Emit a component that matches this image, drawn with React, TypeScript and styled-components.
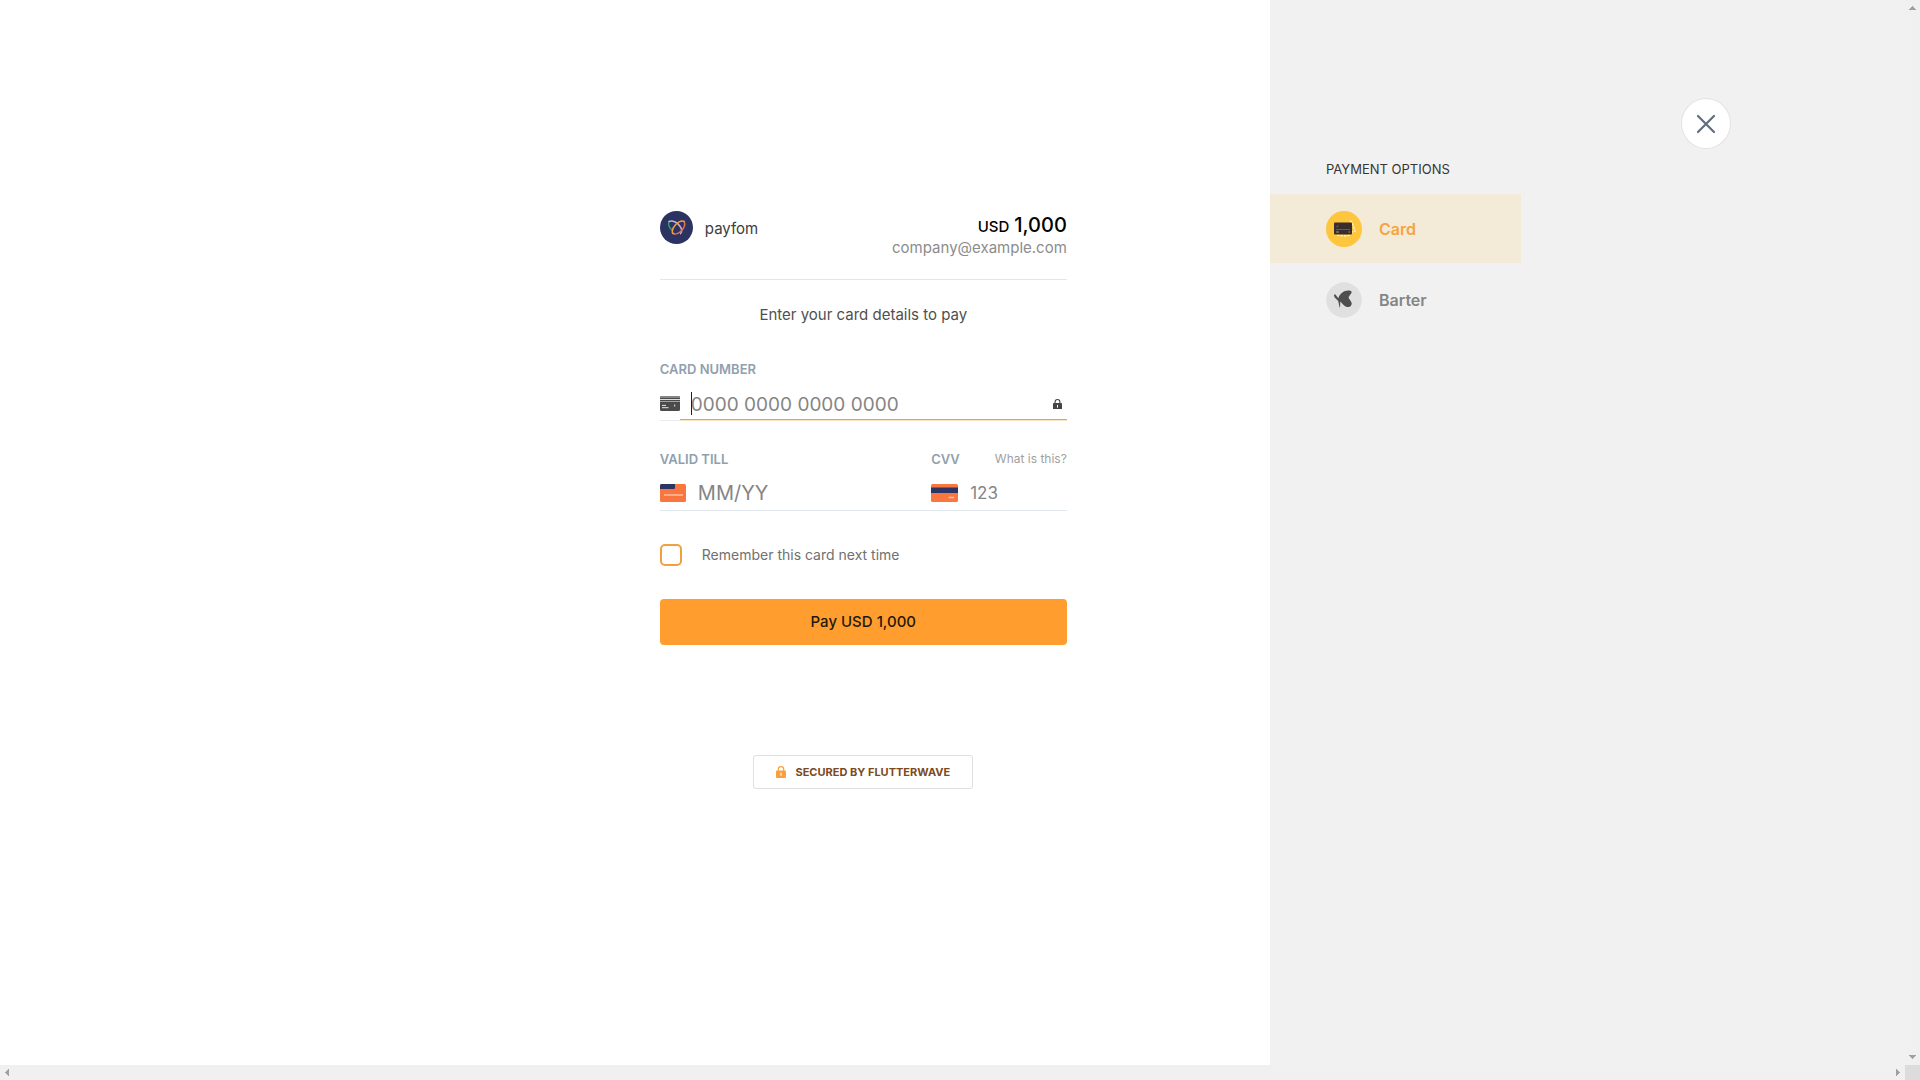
import React from "react";
import styled, { createGlobalStyle } from "styled-components";

const GlobalStyle = createGlobalStyle`
  *, *::before, *::after { box-sizing: border-box; }
  body {
    margin: 0;
    background: #ffffff;
    font-family: Inter, "Liberation Sans", sans-serif;
    font-size: 15px;
    line-height: 20px;
    color: #4a4a4a;
  }
  button, input { font: inherit; color: inherit; }
`;

const Window = styled.div`
  display: grid;
  grid-template-columns: minmax(0, 1fr) 15px;
  grid-template-rows: minmax(0, 1fr) 15px;
  min-height: 100vh;
`;

const Page = styled.div`
  display: grid;
  grid-template-columns: 2fr 1fr;
`;

const Main = styled.main`
  display: flex;
  justify-content: flex-end;
  align-items: flex-start;
  padding: 211px 16% 0 0;
  background: #ffffff;
`;

const Form = styled.form`
  display: flex;
  flex-direction: column;
  width: 407px;
`;

const Header = styled.header`
  display: flex;
  justify-content: space-between;
  align-items: flex-start;
  height: 69px;
  border-bottom: 1px solid #e6e6e6;
`;

const Merchant = styled.div`
  display: flex;
  gap: 12px;
  line-height: 36px;
  color: #3d3d3d;
`;

const Amount = styled.div`
  text-align: right;
  line-height: 14px;
  color: #8c8c8c;
`;

const Total = styled.div`
  display: flex;
  justify-content: flex-end;
  align-items: baseline;
  gap: 5px;
  line-height: 28px;
  font-weight: 500;
  color: #000000;
`;

const TotalValue = styled.span`
  font-size: 20px;
`;

const Prompt = styled.p`
  margin: 25px 0 34px;
  text-align: center;
  color: #4f4f4f;
`;

const LabelRow = styled.div`
  display: flex;
  justify-content: space-between;
  line-height: 20px;
  font-size: 13px;
`;

const Label = styled.label`
  font-weight: 600;
  color: #90a0ae;
`;

const HelpLink = styled.a`
  font-size: 12px;
  color: #a0a0a0;
  text-decoration: none;
`;

const TextInput = styled.input<{ $size: number }>`
  flex: 1;
  min-width: 0;
  height: 100%;
  padding: 0;
  border: 0;
  outline: 0;
  background: transparent;
  font-size: ${(p) => p.$size}px;
  &::placeholder { color: #858585; opacity: 1; }
`;

const NumberField = styled.div`
  display: flex;
  align-items: center;
  height: 42px;
  margin-bottom: 28px;
`;

const NumberIcon = styled.span`
  display: flex;
  align-items: center;
  height: 100%;
  padding-top: 6px;
  border-bottom: 1px solid #e6ecf0;
`;

const NumberEntry = styled.span`
  position: relative;
  display: flex;
  flex: 1;
  align-items: center;
  height: 100%;
  padding: 9px 5px 0 11px;
  border-bottom: 1px solid #fbe3c4;
  box-shadow: inset 0 -1px 0 #f0a040;
  &::before {
    content: "";
    position: absolute;
    left: 11px;
    top: 13px;
    width: 1px;
    height: 23px;
    background: #14202b;
  }
`;

const Fields = styled.div`
  display: grid;
  grid-template-columns: minmax(0, 2fr) minmax(0, 1fr);
  border-bottom: 1px solid #e2e8ee;
`;

const SmallField = styled.div`
  display: flex;
  align-items: center;
  gap: 12px;
  height: 30px;
  margin: 9px 0 2px;
`;

const Remember = styled.label`
  display: flex;
  align-items: center;
  gap: 20px;
  margin: 33px 0;
  font-size: 14px;
  color: #717171;
`;

const Checkbox = styled.input`
  appearance: none;
  width: 22px;
  height: 22px;
  margin: 0;
  border: 2px solid #f2a03f;
  border-radius: 5px;
  background: #ffffff;
  &:checked { background: #f2a03f; }
`;

const PayButton = styled.button`
  height: 46px;
  padding: 0;
  border: 0;
  border-radius: 4px;
  background: #ff9e2f;
  font-weight: 500;
  font-size: 15px;
  color: #24180c;
`;

const Secured = styled.div`
  display: flex;
  align-items: center;
  align-self: center;
  gap: 9px;
  height: 34px;
  margin-top: 110px;
  padding: 0 22px;
  border: 1px solid #e0e0e0;
  border-radius: 3px;
  font-size: 11px;
  font-weight: 700;
  color: #7a4a1e;
`;

const Side = styled.aside`
  padding-top: 98px;
  background: #f1f1f1;
`;

const CloseRow = styled.div`
  display: flex;
  justify-content: flex-end;
  padding-right: 174px;
`;

const CloseButton = styled.button`
  display: grid;
  place-items: center;
  width: 50px;
  height: 51px;
  padding: 0;
  border: 1px solid #e2e2e2;
  border-radius: 50%;
  background: #ffffff;
`;

const SideTitle = styled.h2`
  margin: 10px 0 15px;
  padding-left: 56px;
  font-size: 13px;
  line-height: 20px;
  font-weight: 400;
  color: #363636;
`;

const Option = styled.button<{ $active?: boolean }>`
  display: flex;
  align-items: center;
  gap: 17px;
  width: 251px;
  height: 69px;
  margin-bottom: 2px;
  padding: 1px 0 0 56px;
  border: 0;
  background: ${(p) => (p.$active ? "#f3ead8" : "transparent")};
  font-size: 16px;
  font-weight: 600;
  color: ${(p) => (p.$active ? "#f5a445" : "#858585")};
`;

const Track = styled.div<{ $vertical?: boolean }>`
  display: flex;
  flex-direction: ${(p) => (p.$vertical ? "column" : "row")};
  justify-content: space-between;
  align-items: center;
  padding: ${(p) => (p.$vertical ? "6px 0" : "0 5px")};
  background: #f0f0f0;
`;

const Corner = styled.div`
  background: #dcdcdc;
`;

const Arrow = ({ d, w, h }: { d: string; w: number; h: number }) => (
  <svg width={w} height={h} viewBox={`0 0 ${w} ${h}`} aria-hidden="true">
    <path d={d} fill="#a0a0a0" />
  </svg>
);

const Logo = () => (
  <svg width="33" height="33" viewBox="0 0 33 33" aria-hidden="true">
    <circle cx="16.5" cy="16.5" r="16.5" fill="#2a3362" />
    <g fill="none" strokeWidth="1.5" strokeLinecap="round">
      <path d="M9 10.500c-1.300 3 .5 7 3.500 8.800" stroke="#2f9c68" />
      <path d="M9 10.500c3.500-1.500 8 .5 10.800 4.500 2 2.800 2.300 6 .8 7.600" stroke="#d0acd6" />
      <path d="M24.200 10.500c1.200 2.500 0 6.300-3 9.500-2.400 2.500-6 3.700-8 2.500" stroke="#e5704a" />
      <path d="M24.200 10.500c-3-1.300-7.200 1-9.500 4.200-2.400 3-3.300 6.700-1.500 7.800" stroke="#f0a13c" />
    </g>
  </svg>
);

const GreyCard = () => (
  <svg width="20" height="16" viewBox="0 0 20 16" aria-hidden="true">
    <rect y="1" width="20" height="15" rx="1.500" fill="#4b4b4b" />
    <path d="M0 2.500Q0 1 1.500 1h17Q20 1 20 2.500V3H0z" fill="#858585" />
    <path d="M0 4h20v1H0z" fill="#dcdcdc" />
    <path d="M0 6.200h20v.8H0z" fill="#b8b8b8" />
    <path d="M2 10.400h4M2 12.700h6.500M14.700 9.500v2" stroke="#e8e8e8" strokeWidth="1" />
  </svg>
);

const Lock = ({ width, color }: { width: number; color: string }) => (
  <svg width={width} height={width * 1.2} viewBox="0 0 10 12" aria-hidden="true">
    <path d="M2.300 5V3.300a2.700 2.700 0 0 1 5.400 0V5" fill="none" stroke={color} strokeWidth="1.200" />
    <rect y="4.500" width="10" height="7.500" rx="1" fill={color} />
    <path d="M5 7v2.200" stroke="#ffffff" strokeWidth="1.100" strokeLinecap="round" />
  </svg>
);

const DateCard = () => (
  <svg width="26" height="18" viewBox="0 0 26 18" aria-hidden="true">
    <rect width="26" height="18" rx="1.500" fill="#f9763f" />
    <path d="M1.500 0H15v3.500Q15 5 13.500 5H0V1.500Q0 0 1.500 0z" fill="#2b3462" />
    <path d="M4 11h19" stroke="#ffc0a6" strokeWidth="1.500" />
  </svg>
);

const CvvCard = () => (
  <svg width="27" height="18" viewBox="0 0 27 18" aria-hidden="true">
    <rect width="27" height="18" rx="1.500" fill="#f9763f" />
    <path d="M0 3.500h27v5.500H0z" fill="#2b3462" />
    <path d="M17.500 13.500H23" stroke="#ffc0a6" strokeWidth="1.500" />
  </svg>
);

const CardOptionIcon = () => (
  <svg width="36" height="36" viewBox="0 0 36 36" aria-hidden="true">
    <circle cx="18" cy="18" r="18" fill="#fdc63d" />
    <path d="M24 10l2 1 3 9-3 1M11 24l8 1 6-1" fill="none" stroke="#fff1c4" strokeWidth="1.500" strokeDasharray="2.500 1" />
    <rect x="8" y="11.500" width="18" height="12" rx="1" fill="#382d2f" />
    <path d="M10 18.500h14" stroke="#a9875a" strokeWidth=".5" />
    <path d="M10 21h3M22.500 21h1.500" stroke="#f6c453" strokeWidth=".7" />
    <path d="M10.500 15.500l.7.700 1-2" fill="none" stroke="#a07c62" strokeWidth=".6" />
  </svg>
);

const BarterIcon = () => (
  <svg width="36" height="36" viewBox="0 0 36 36" aria-hidden="true">
    <circle cx="18" cy="18" r="17.700" fill="#e0e0e0" />
    <path d="M8 13.200c.5-1.400 1.400-1 2 .1l2.300 3C14 11.500 18 8.200 23 8.600c2 .1 3 .9 2.500 2.200-.5 1.400-1.600 2-3 4.700.3 1.400 2.300 3 3.100 5.300.5 1.700-.8 4.300-3.300 4.300-3.500 0-6-3.700-8-5.700l-.2 5.800c-.1.700-.6.300-.6-.1L12.200 19 8.500 15.200z" fill="#4e4e4e" />
  </svg>
);

export default function App() {
  return (
    <>
      <GlobalStyle />
      <Window>
        <Page>
          <Main>
            <Form onSubmit={(e) => e.preventDefault()}>
              <Header>
                <Merchant>
                  <Logo />
                  <span>payfom</span>
                </Merchant>
                <Amount>
                  <Total>
                    <span>USD</span>
                    <TotalValue>1,000</TotalValue>
                  </Total>
                  <div>company@example.com</div>
                </Amount>
              </Header>
              <Prompt>Enter your card details to pay</Prompt>

              <LabelRow>
                <Label htmlFor="number">CARD NUMBER</Label>
              </LabelRow>
              <NumberField>
                <NumberIcon>
                  <GreyCard />
                </NumberIcon>
                <NumberEntry>
                  <TextInput $size={19} id="number" inputMode="numeric" placeholder="0000 0000 0000 0000" />
                  <Lock width={9} color="#444444" />
                </NumberEntry>
              </NumberField>

              <Fields>
                <div>
                  <LabelRow>
                    <Label htmlFor="expiry">VALID TILL</Label>
                  </LabelRow>
                  <SmallField>
                    <DateCard />
                    <TextInput $size={20} id="expiry" placeholder="MM/YY" />
                  </SmallField>
                </div>
                <div>
                  <LabelRow>
                    <Label htmlFor="cvv">CVV</Label>
                    <HelpLink href="#cvv">What is this?</HelpLink>
                  </LabelRow>
                  <SmallField>
                    <CvvCard />
                    <TextInput $size={17} id="cvv" inputMode="numeric" placeholder="123" />
                  </SmallField>
                </div>
              </Fields>

              <Remember>
                <Checkbox type="checkbox" />
                <span>Remember this card next time</span>
              </Remember>
              <PayButton type="submit">Pay USD 1,000</PayButton>
              <Secured>
                <Lock width={10} color="#f9a03c" />
                <span>SECURED BY FLUTTERWAVE</span>
              </Secured>
            </Form>
          </Main>

          <Side>
            <CloseRow>
              <CloseButton type="button" aria-label="Close">
                <svg width="20" height="20" viewBox="0 0 20 20" aria-hidden="true">
                  <path d="M2 2l16 16M18 2L2 18" stroke="#5f6e7e" strokeWidth="2.200" strokeLinecap="round" />
                </svg>
              </CloseButton>
            </CloseRow>
            <SideTitle>PAYMENT OPTIONS</SideTitle>
            <Option type="button" $active>
              <CardOptionIcon />
              <span>Card</span>
            </Option>
            <Option type="button">
              <BarterIcon />
              <span>Barter</span>
            </Option>
          </Side>
        </Page>
        <Track $vertical>
          <Arrow w={7} h={4} d="M3 0h1v1h1v1h1v1h1v1H0V3h1V2h1V1h1z" />
          <Arrow w={7} h={4} d="M0 0h7v1H6v1H5v1H4v1H3V3H2V2H1V1H0z" />
        </Track>
        <Track>
          <Arrow w={4} h={7} d="M4 0v7H3V6H2V5H1V4H0V3h1V2h1V1h1V0z" />
          <Arrow w={4} h={7} d="M0 0v7h1V6h1V5h1V4h1V3H3V2H2V1H1V0z" />
        </Track>
        <Corner />
      </Window>
    </>
  );
}
